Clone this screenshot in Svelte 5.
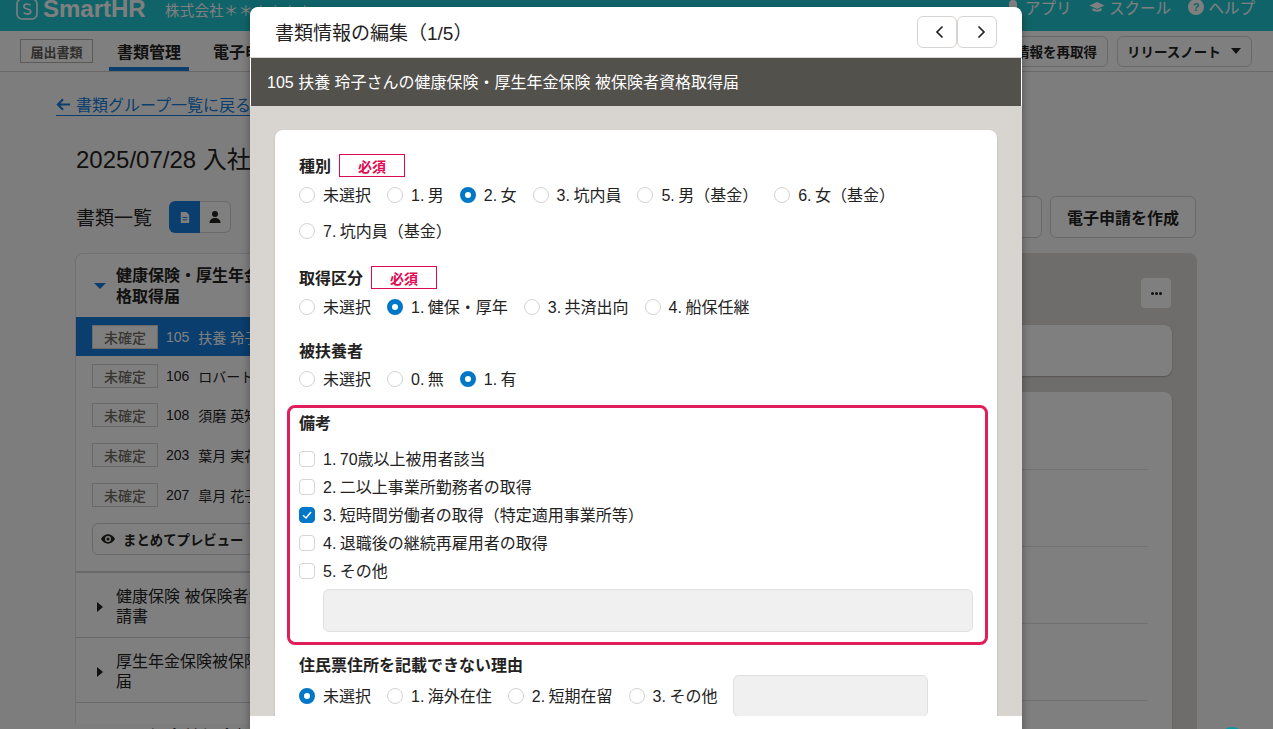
<script>
  const rows = [
    { no: '105', name: '扶養 玲子', selected: true },
    { no: '106', name: 'ロバート 山田' },
    { no: '108', name: '須磨 英知' },
    { no: '203', name: '葉月 実花' },
    { no: '207', name: '皐月 花子' }
  ];
  const others = [
    ['健康保険 被保険者資格取得申', '請書'],
    ['厚生年金保険被保険者資格取得', '届'],
    ['雇用保険 被保険者資格取得届', '']
  ];
  const kinds = [
    ['未選択', false], ['1. 男', false], ['2. 女', true], ['3. 坑内員', false],
    ['5. 男（基金）', false], ['6. 女（基金）', false], ['7. 坑内員（基金）', false]
  ];
  const acquire = [['未選択', false], ['1. 健保・厚年', true], ['3. 共済出向', false], ['4. 船保任継', false]];
  const dependents = [['未選択', false], ['0. 無', false], ['1. 有', true]];
  const notes = [
    ['1. 70歳以上被用者該当', false],
    ['2. 二以上事業所勤務者の取得', false],
    ['3. 短時間労働者の取得（特定適用事業所等）', true],
    ['4. 退職後の継続再雇用者の取得', false],
    ['5. その他', false]
  ];
  const reasons = [['未選択', true], ['1. 海外在住', false], ['2. 短期在留', false], ['3. その他', false]];
</script>

{#snippet radios(items)}
  {#each items as [label, on]}
    <span class="opt"><i class="radio" class:on></i><span class="t">{label}</span></span>
  {/each}
{/snippet}

<div class="page">
  <header class="top">
    <div class="brand">
      <svg class="logo" viewBox="0 0 22 22" width="22" height="22"><rect x="1" y="1" width="20" height="20" rx="5" fill="none" stroke="currentColor" stroke-width="1.6"/><path d="M14.5 7.5c-.8-1-2-1.5-3.4-1.5-1.900 0-3.200 1-3.200 2.500 0 3.300 6.800 1.700 6.800 5 0 1.600-1.400 2.600-3.400 2.600-1.500 0-2.800-.6-3.600-1.700" fill="none" stroke="currentColor" stroke-width="1.600"/></svg>
      <span class="wordmark">SmartHR</span>
      <span class="company">株式会社＊＊＊＊＊＊</span>
    </div>
    <nav class="toplinks">
      <span class="toplink">
        <svg viewBox="0 0 16 16" width="16" height="16"><path d="M8 1a4 4 0 0 1 4 4v4l2 2H2l2-2V5a4 4 0 0 1 4-4z" fill="currentColor"/></svg>アプリ
      </span>
      <span class="toplink">
        <svg viewBox="0 0 16 16" width="16" height="16"><path d="M8 3 .5 6.500 8 10l7.500-3.500zM3.500 9v2.500C5 13 11 13 12.500 11.500V9L8 11z" fill="currentColor"/></svg>スクール
      </span>
      <span class="toplink">
        <svg viewBox="0 0 16 16" width="16" height="16"><circle cx="8" cy="8" r="8" fill="currentColor"/><text x="8" y="12" text-anchor="middle" font-size="11" font-weight="700" fill="#1ec8d0" font-family="Liberation Sans">?</text></svg>ヘルプ
      </span>
    </nav>
  </header>

  <div class="subnav">
    <span class="chip">届出書類</span>
    <span class="tab active">書類管理</span>
    <span class="tab">電子申請</span>
    <span class="spacer"></span>
    <button class="btn small">従業員情報を再取得</button>
    <button class="btn small release">リリースノート<i class="caret-down dark"></i></button>
  </div>

  <main class="main">
    <a class="back" href="#back">
      <svg viewBox="0 0 16 16" width="15" height="15"><path d="M15 8H2.500M7.500 2.500 2 8l5.500 5.500" fill="none" stroke="currentColor" stroke-width="2.200"/></svg>
      <span>書類グループ一覧に戻る</span>
    </a>
    <h1>2025/07/28 入社手続き</h1>
    <div class="listhead">
      <h2>書類一覧</h2>
      <div class="toggle">
        <span class="tg on"><svg viewBox="0 0 14 14" width="13" height="13"><path d="M3 1h6l3 3v9H3z" fill="currentColor"/><path d="M5 7h5M5 9.500h5" stroke="#147cdc" stroke-width="1"/></svg></span>
        <span class="tg"><svg viewBox="0 0 14 14" width="14" height="14"><circle cx="7" cy="4" r="3" fill="currentColor"/><path d="M1.500 13c0-3.500 2.500-5 5.500-5s5.500 1.500 5.500 5z" fill="currentColor"/></svg></span>
      </div>
      <span class="spacer"></span>
      <button class="btn large">一括操作</button>
      <button class="btn large">電子申請を作成</button>
    </div>

    <div class="columns">
      <section class="left">
        <div class="group">
          <div class="grouphead">
            <i class="caret-down blue"></i>
            <strong>健康保険・厚生年金保険 被保険者資<br />格取得届</strong>
          </div>
          {#each rows as r}
            <div class="row" class:selected={r.selected}>
              <span class="status">未確定</span>
              <span class="no">{r.no}</span>
              <span class="name">{r.name}</span>
            </div>
          {/each}
          <button class="preview">
            <svg viewBox="0 0 16 16" width="14" height="14"><path d="M0 8c2-3.500 4.800-5.300 8-5.300S14 4.500 16 8c-2 3.500-4.800 5.300-8 5.300S2 11.500 0 8z" fill="currentColor"/><circle cx="8" cy="8" r="3.400" fill="#fff"/><circle cx="8" cy="8" r="1.800" fill="currentColor"/></svg>
            まとめてプレビュー
          </button>
        </div>
        {#each others as [a, b]}
          <div class="other">
            <i class="caret-right"></i>
            <span>{a}<br />{b}</span>
          </div>
        {/each}
      </section>

      <section class="right">
        <div class="righthead">
          <button class="more" aria-label="その他"><i></i><i></i><i></i></button>
        </div>
        <div class="rcard short"></div>
        <div class="rcard tall">
          <hr /><hr /><hr /><hr />
        </div>
      </section>
    </div>
  </main>

  <div class="overlay"></div>
  <span class="fab"></span>

  <div class="modal">
    <div class="mhead">
      <h3>書類情報の編集（1/5）</h3>
      <div class="pager">
        <button class="prev" aria-label="前へ"><svg viewBox="0 0 12 14" width="12" height="14"><path d="M8.500 1.500 3 7l5.500 5.500" fill="none" stroke="#23221e" stroke-width="1.700"/></svg></button>
        <button class="next" aria-label="次へ"><svg viewBox="0 0 12 14" width="12" height="14"><path d="M3.500 1.500 9 7l-5.500 5.500" fill="none" stroke="#23221e" stroke-width="1.700"/></svg></button>
      </div>
    </div>
    <div class="mbar">105 扶養 玲子さんの健康保険・厚生年金保険 被保険者資格取得届</div>
    <div class="mbody">
      <div class="card">
        <div class="label"><b>種別</b><span class="req">必須</span></div>
        <div class="opts">{@render radios(kinds)}</div>

        <div class="label second"><b>取得区分</b><span class="req">必須</span></div>
        <div class="opts">{@render radios(acquire)}</div>

        <div class="label third"><b>被扶養者</b></div>
        <div class="opts">{@render radios(dependents)}</div>

        <div class="highlight">
          <div class="label plain"><b>備考</b></div>
          <div class="checks">
            {#each notes as [label, on]}
              <span class="check-row">
                <i class="check" class:on>
                  {#if on}<svg viewBox="0 0 16 16" width="16" height="16"><path d="M4 8.300 7 11l5-6" fill="none" stroke="#fff" stroke-width="1.500"/></svg>{/if}
                </i><span class="t">{label}</span>
              </span>
            {/each}
          </div>
          <div class="field wide"></div>
        </div>

        <div class="label fourth"><b>住民票住所を記載できない理由</b></div>
        <div class="opts reason">
          {@render radios(reasons)}
          <div class="field narrow"></div>
        </div>
      </div>
    </div>
    <div class="mfoot"></div>
  </div>
</div>

<style>
  :global(body) {
    margin: 0;
    background: #fbf9f9;
  }
  .page {
    position: relative;
    height: 729px;
    overflow: hidden;
    background: #fdfbfa;
    color: #23221e;
    font-family: "Liberation Sans", "Noto Sans CJK JP", sans-serif;
    font-size: 16px;
  }
  button { font-family: inherit; color: inherit; }
  i { display: inline-block; font-style: normal; }
  .spacer { flex: 1; }

  .top {
    height: 31px;
    box-sizing: border-box;
    padding: 0 18px 0 16px;
    background: #20c9d2;
    color: #fff;
    display: flex;
    justify-content: space-between;
    align-items: center;
    overflow: hidden;
  }
  .brand { display: flex; align-items: center; margin-top: -13px; }
  .logo { margin-right: 5px; flex: none; }
  .wordmark { font-weight: 700; font-size: 24px; width: 122px; }
  .company { font-size: 14.500px; letter-spacing: .2px; }
  .toplinks { display: flex; gap: 17.500px; margin-top: -17px; }
  .toplink { display: flex; align-items: center; gap: 4px; font-size: 15.500px; }

  .subnav {
    height: 41px;
    box-sizing: border-box;
    display: flex;
    align-items: center;
    padding: 0 21px 0 20px;
    background: #fff;
    border-bottom: 1px solid #d6d3d0;
  }
  .chip {
    width: 73px;
    height: 24px;
    box-sizing: border-box;
    border: 1px solid #b8b5b1;
    font-size: 13px;
    font-weight: 700;
    color: #5f5c58;
    display: flex;
    align-items: center;
    justify-content: center;
    margin-right: 16px;
  }
  .tab {
    align-self: stretch;
    display: flex;
    align-items: center;
    padding: 0 8px;
    margin-right: 16px;
    font-weight: 700;
    box-sizing: border-box;
    border-bottom: 4px solid transparent;
    border-top: 4px solid transparent;
  }
  .tab.active { border-bottom-color: #147cdc; }
  .btn {
    background: #fff;
    border: 1px solid #d6d3d0;
    border-radius: 6px;
    font-weight: 700;
  }
  .btn.small { height: 31px; font-size: 13.500px; padding: 0 10px; margin-left: 9px; white-space: nowrap; }
  .btn.small.release { display: flex; align-items: center; gap: 10px; width: 135px; padding: 0 8px 0 9px; }
  .caret-down {
    width: 0; height: 0;
    border-left: 5px solid transparent;
    border-right: 5px solid transparent;
    border-top: 6px solid;
  }
  .caret-down.blue { color: #147cdc; border-left-width: 6px; border-right-width: 6px; }

  .main { padding: 0 76px; }
  .back {
    display: flex;
    width: 240px;
    align-items: center;
    gap: 5px;
    margin: 21px 0 0 -20px;
    color: #147cdc;
    text-decoration: none;
    border-bottom: 1px solid #147cdc;
    height: 22px;
    white-space: nowrap;
  }
  h1 { font-weight: 400; font-size: 24px; line-height: 32px; margin: 28px 0 0; }
  .listhead { display: flex; align-items: center; margin-top: 20px; height: 42px; gap: 8px; padding-right: 1px; }
  h2 { font-weight: 400; font-size: 19px; margin: 0 9px 2px 0; }
  .toggle { display: flex; height: 32px; }
  .tg {
    width: 31px;
    display: flex;
    align-items: center;
    justify-content: center;
    border: 1px solid #d6d3d0;
    border-left: 0;
    background: #fff;
    border-radius: 0 6px 6px 0;
    box-sizing: border-box;
  }
  .tg.on {
    background: #147cdc;
    color: #fff;
    border: 0;
    border-radius: 6px 0 0 6px;
  }
  .btn.large { height: 42px; padding: 0 16px; font-size: 16px; width: 146px; white-space: nowrap; }

  .columns { display: grid; grid-template-columns: 340px 1fr; gap: 16px; margin-top: 15px; }
  .left {
    border: 1px solid #e6e3e0;
    border-bottom: 0;
    border-radius: 8px 8px 0 0;
    background: #fff;
    height: 470px;
    margin-left: -1px;
  }
  .group { border-bottom: 2px solid #d6d3d0; padding-bottom: 16px; }
  .grouphead { height: 63px; display: flex; align-items: center; gap: 10px; padding-left: 18px; line-height: 21px; white-space: nowrap; }
  .row {
    height: 39.600px;
    display: flex;
    align-items: center;
    padding-left: 16px;
    font-size: 14px;
    white-space: nowrap;
  }
  .row.selected { background: #147cdc; color: #fff; height: 39px; }
  .status {
    width: 66px;
    height: 24px;
    box-sizing: border-box;
    border: 1px solid #d6d3d0;
    background: #fff;
    color: #706d65;
    font-size: 14px;
    font-weight: 500;
    display: flex;
    align-items: center;
    justify-content: center;
    margin-right: 8px;
  }
  .no { margin-right: 9px; }
  .preview {
    display: flex;
    align-items: center;
    gap: 8px;
    margin: 9px 0 0 16px;
    padding: 0 8px;
    width: 260px;
    height: 32px;
    background: #fff;
    border: 1px solid #d6d3d0;
    border-radius: 6px;
    font-size: 13.400px;
    font-weight: 700;
    white-space: nowrap;
  }
  .other {
    height: 65px;
    box-sizing: border-box;
    padding-top: 3px;
    border-bottom: 1px solid #d6d3d0;
    display: flex;
    align-items: center;
    gap: 13px;
    padding-left: 21px;
    line-height: 20px;
    white-space: nowrap;
  }
  .caret-right {
    width: 0; height: 0;
    border-top: 5px solid transparent;
    border-bottom: 5px solid transparent;
    border-left: 6px solid #23221e;
  }

  .right {
    background: #dfdad6;
    border-radius: 8px 8px 0 0;
    height: 480px;
    padding: 25px 25px 0 24px;
  }
  .righthead { display: flex; justify-content: flex-end; height: 30px; margin-bottom: 17px; }
  .more {
    width: 30px;
    height: 30px;
    margin-right: 1px;
    background: #fff;
    border: 0;
    border-radius: 4px;
    display: flex;
    align-items: center;
    justify-content: center;
    gap: 1px;
  }
  .more i { width: 3px; height: 3px; border-radius: 50%; background: #23221e; }
  .rcard { background: #fff; border-radius: 8px; box-shadow: 0 1px 2px rgba(0,0,0,.25); }
  .short { height: 51px; margin-bottom: 16px; }
  .tall { height: 400px; padding: 77px 24px 0 0; box-sizing: border-box; }
  .tall hr { border: 0; border-top: 1px solid #e6e3e0; margin: 0 0 76px; }

  .overlay { position: absolute; inset: 0; background: rgba(0, 0, 0, .5); }
  .fab {
    position: absolute;
    left: 1219px;
    top: 727px;
    width: 26px;
    height: 26px;
    border-radius: 50%;
    background: #009aa3;
  }

  .modal {
    position: absolute;
    top: 7px;
    left: 250px;
    width: 772px;
    height: 730px;
    display: flex;
    flex-direction: column;
    background: #fff;
    border-radius: 8px 8px 0 0;
    box-shadow: 0 4px 10px rgba(0, 0, 0, .35);
    overflow: hidden;
  }
  .mhead {
    height: 51px;
    flex: none;
    box-sizing: border-box;
    display: flex;
    align-items: center;
    justify-content: space-between;
    padding: 0 25px 2px 25px;
    border-bottom: 1px solid #d6d3d0;
  }
  h3 { margin: 0; font-size: 19px; font-weight: 400; }
  .pager { display: flex; margin-top: 2px; }
  .pager button {
    width: 40px;
    height: 32px;
    padding: 0;
    display: flex;
    align-items: center;
    justify-content: center;
    background: #fff;
    border: 1px solid #d6d3d0;
    border-radius: 6px;
  }
  .pager .prev { padding-left: 6px; }
  .pager .next { padding-left: 8px; }
  .mbar {
    height: 48px;
    flex: none;
    box-sizing: border-box;
    margin: 0 1px;
    padding: 0 0 3px 16px;
    background: #53514c;
    color: #fff;
    display: flex;
    align-items: center;
    font-size: 16px;
  }
  .mbody {
    height: 610px;
    flex: none;
    padding: 24px 25px 0;
    box-sizing: border-box;
    background: #d8d4d0;
    overflow: hidden;
  }
  .card {
    background: #fff;
    border-radius: 8px 8px 0 0;
    height: 620px;
    padding: 24px 24px 0;
    box-sizing: border-box;
    box-shadow: 0 1px 2px rgba(0,0,0,.2);
  }
  .mfoot { flex: 1; background: #fff; margin-right: 1px; }
  .label { display: flex; align-items: center; height: 23px; gap: 8px; }
  .label b { font-weight: 700; font-size: 16px; margin-top: -2px; }
  .second { margin-top: 17px; }
  .third { margin-top: 14px; height: 22px; }
  .third b { margin-top: 0; }
  .fourth { margin-top: 9px; height: 22px; }
  .plain { height: 22px; }
  .req {
    width: 66px;
    height: 23px;
    box-sizing: border-box;
    border: 1px solid #df0a52;
    color: #df0a52;
    font-size: 14px;
    font-weight: 700;
    display: flex;
    align-items: center;
    justify-content: center;
  }
  .t { margin-top: -2px; }
  .opts { display: flex; flex-wrap: wrap; column-gap: 16px; font-size: 16px; word-spacing: -1px; }
  .opt { display: flex; align-items: center; gap: 8px; height: 36px; white-space: nowrap; }
  .radio {
    width: 16px;
    height: 16px;
    box-sizing: border-box;
    border: 1px solid #d6d3d0;
    border-radius: 50%;
    background: #fff;
    flex: none;
  }
  .radio.on { border: 5px solid #0077c7; }
  .highlight {
    margin: 8px -15px 0 -12px;
    padding: 4px 12px 10px 9px;
    border: 3px solid #e01e5a;
    border-radius: 8px;
  }
  .checks { display: flex; flex-direction: column; margin-top: 11px; font-size: 16px; word-spacing: -1px; }
  .check-row { display: flex; align-items: center; gap: 8px; height: 28px; }
  .check {
    width: 16px;
    height: 16px;
    box-sizing: border-box;
    border: 1px solid #d6d3d0;
    border-radius: 4px;
    flex: none;
    position: relative;
  }
  .check svg { position: absolute; left: -1px; top: -1px; }
  .check.on { background: #0077c7; border-color: #0077c7; }
  .field {
    background: #f0f0f0;
    border: 1px solid #e2e0dd;
    border-radius: 6px;
    box-sizing: border-box;
    height: 43px;
  }
  .wide { margin: 4px 0 0 24px; }
  .reason { margin-top: -1px; height: 42px; align-items: center; flex-wrap: nowrap; }
  .narrow { width: 195px; height: 42px; }
</style>
